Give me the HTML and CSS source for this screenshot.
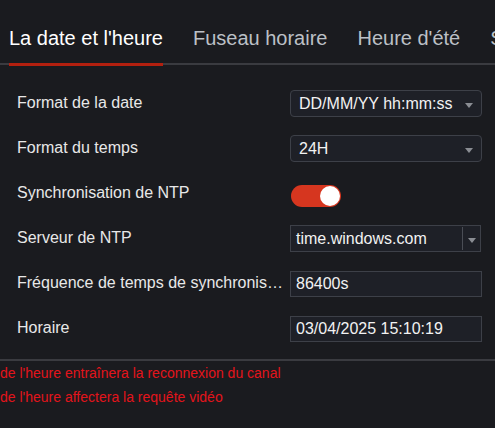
FILE: index.html
```html
<!DOCTYPE html>
<html lang="fr">
<head>
    <meta charset="UTF-8">
    <meta name="viewport" content="width=device-width, initial-scale=1.0">
    <title>La date et l'heure</title>
    <link rel="stylesheet" href="styles.css">
</head>
<body>
    <nav class="tabs">
        <div class="tab active">La date et l'heure</div>
        <div class="tab">Fuseau horaire</div>
        <div class="tab">Heure d'été</div>
        <div class="tab">Synchronisation</div>
    </nav>

    <div class="form">
        <div class="row">
            <div class="label">Format de la date</div>
            <div class="select rounded">
                <span>DD/MM/YY hh:mm:ss</span>
                <span class="caret"></span>
            </div>
        </div>
        <div class="row">
            <div class="label">Format du temps</div>
            <div class="select rounded">
                <span>24H</span>
                <span class="caret"></span>
            </div>
        </div>
        <div class="row">
            <div class="label">Synchronisation de NTP</div>
            <div class="switch on"><span class="knob"></span></div>
        </div>
        <div class="row">
            <div class="label">Serveur de NTP</div>
            <div class="select combo">
                <span>time.windows.com</span>
                <span class="combo-btn"><span class="caret"></span></span>
            </div>
        </div>
        <div class="row">
            <div class="label">Fréquence de temps de synchronisation</div>
            <div class="input">86400s</div>
        </div>
        <div class="row">
            <div class="label">Horaire</div>
            <div class="input">03/04/2025 15:10:19</div>
        </div>
    </div>

    <div class="notes">
        <p>de l'heure entraînera la reconnexion du canal</p>
        <p>de l'heure affectera la requête vidéo</p>
    </div>
</body>
</html>
```

FILE: styles.css
```css
body {
    margin: 0;
    background-color: #1a1b1f;
    font-family: "Liberation Sans", Arial, sans-serif;
    color: #e8e8e8;
    overflow: hidden;
}

/* onglets */
.tabs {
    display: flex;
    gap: 30px;
    padding-left: 9px;
    border-bottom: 2px solid #3a3b40;
    white-space: nowrap;
    overflow: visible;
}
.tab {
    font-size: 20px;
    line-height: 23px;
    padding: 27px 0 13px;
    color: #bcc0c6;
    border-bottom: 3px solid transparent;
    margin-bottom: -3px;
}
.tab.active {
    color: #ffffff;
    border-bottom-color: #b3200f;
}

/* formulaire */
.form {
    padding: 16px 13px 8px 17px;
}
.row {
    display: flex;
    align-items: center;
    gap: 5px;
    height: 45px;
}
.label {
    width: 268px;
    flex: none;
    font-size: 16px;
    padding-bottom: 2px;
    white-space: nowrap;
    overflow: hidden;
    text-overflow: ellipsis;
}
.select, .input {
    box-sizing: border-box;
    width: 192px;
    display: flex;
    align-items: center;
    font-size: 16px;
    color: #f2f2f2;
    background-color: #1e2027;
    border: 1px solid #3d4048;
}
.select.rounded {
    height: 27px;
    border-radius: 4px;
    padding: 0 8px;
    justify-content: space-between;
}
.select.combo {
    width: 191px;
    height: 27px;
    padding-left: 5px;
    justify-content: space-between;
}
.combo-btn {
    display: flex;
    align-items: center;
    justify-content: center;
    width: 17px;
    height: 23px;
    border-left: 1px solid #4a4d55;
}
.caret {
    width: 0;
    height: 0;
    margin-top: 3px;
    border-left: 4px solid transparent;
    border-right: 4px solid transparent;
    border-top: 5px solid #8a8d93;
}
.input {
    height: 26px;
    padding-left: 5px;
    margin-top: 1px;
}

/* interrupteur */
.switch {
    box-sizing: border-box;
    width: 50px;
    height: 22px;
    margin: 5px 0 0 1px;
    border-radius: 11px;
    background-color: #d6361f;
    display: flex;
    justify-content: flex-end;
    align-items: center;
    padding: 1px;
}
.knob {
    width: 20px;
    height: 20px;
    border-radius: 50%;
    background-color: #ffffff;
}

/* remarques */
.notes {
    border-top: 2px solid #3a3b40;
    color: #e3141b;
    font-size: 14px;
    line-height: 24px;
}
.notes p {
    margin: 0;
    white-space: nowrap;
}
```
